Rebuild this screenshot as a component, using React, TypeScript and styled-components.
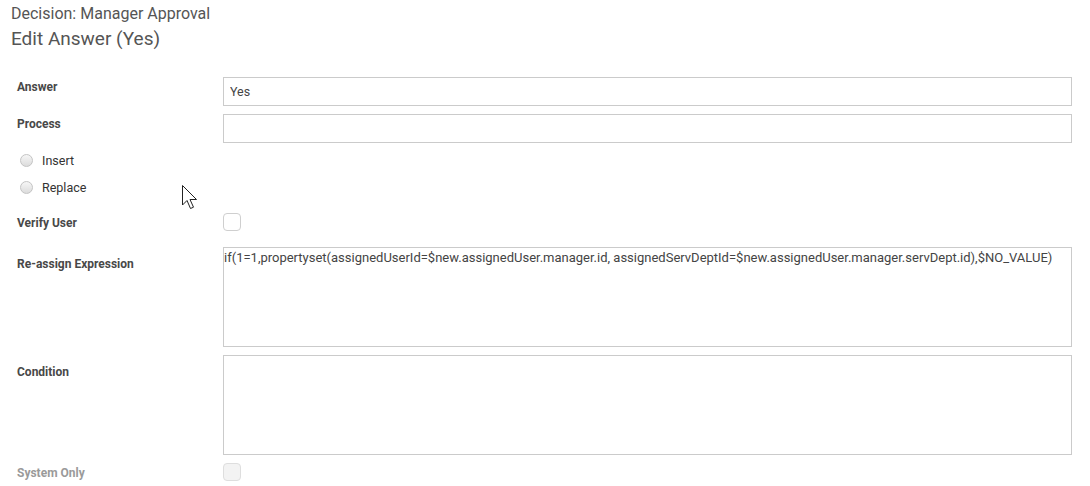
import React from "react";
import styled, { createGlobalStyle } from "styled-components";

const Global = createGlobalStyle`
  html, body { margin: 0; padding: 0; background: #fff; }
  body { font-family: Roboto, "Liberation Sans", Arial, sans-serif; color: #333; }
  * { box-sizing: border-box; }
`;

const Page = styled.div`
  position: relative;
  width: 1090px;
  height: 486px;
  overflow: hidden;
  padding: 4px 18px 0 11px;
`;

const Crumb = styled.div`
  font-size: 16px;
  line-height: 19px;
  color: #555;
`;

const Title = styled.h1`
  margin: 5px 0 0;
  font-size: 19px;
  line-height: 22px;
  font-weight: 400;
  color: #555;
`;

const Form = styled.div`
  margin: 27px 0 0 6px;
  display: flex;
  flex-direction: column;
`;

const Row = styled.div<{ $mt?: number }>`
  display: grid;
  grid-template-columns: 206px 1fr;
  align-items: start;
  margin-top: ${(p) => p.$mt ?? 0}px;
`;

const Label = styled.label<{ $pt?: number; $muted?: boolean }>`
  font-size: 12px;
  line-height: 14px;
  font-weight: 700;
  color: ${(p) => (p.$muted ? "#9a9a9a" : "#484848")};
  padding-top: ${(p) => p.$pt ?? 0}px;
`;

const TextInput = styled.input`
  display: block;
  width: 100%;
  height: 29px;
  border: 1px solid #cbcbcb;
  border-radius: 0;
  padding: 0 6px;
  font-family: Roboto, "Liberation Sans", Arial, sans-serif;
  font-size: 12.5px;
  color: #444;
  background: #fff;
  outline: none;
`;

const Area = styled.textarea`
  display: block;
  width: 100%;
  height: 100px;
  border: 1px solid #cbcbcb;
  border-radius: 0;
  padding: 2px 0 0 0;
  margin: 0;
  font-family: Roboto, "Liberation Sans", Arial, sans-serif;
  font-size: 13px;
  line-height: 15px;
  color: #444;
  resize: none;
  outline: none;
  overflow: hidden;
  white-space: pre;
`;

const RadioRow = styled.label<{ $mt?: number }>`
  display: flex;
  align-items: center;
  height: 27px;
  margin-top: ${(p) => p.$mt ?? 0}px;
  padding-left: 3px;
  gap: 9px;
  font-size: 12.5px;
  color: #333;
`;

const Radio = styled.input`
  appearance: none;
  margin: 0;
  width: 13px;
  height: 13px;
  border-radius: 50%;
  border: 1px solid #c4c4c4;
  background: linear-gradient(#f6f6f6, #dcdcdc);
`;

const Check = styled.input<{ $disabled?: boolean }>`
  appearance: none;
  margin: 0;
  display: block;
  width: 18px;
  height: 18px;
  border-radius: 4px;
  border: 1px solid ${(p) => (p.$disabled ? "#dedede" : "#cfcfcf")};
  background: ${(p) => (p.$disabled ? "#f3f3f3" : "#fff")};
`;

const Cursor = styled.svg`
  position: absolute;
  left: 181px;
  top: 184px;
`;

const expr =
  "if(1=1,propertyset(assignedUserId=$new.assignedUser.manager.id, assignedServDeptId=$new.assignedUser.manager.servDept.id),$NO_VALUE)";

export default function App() {
  return (
    <Page>
      <Global />
      <Crumb>Decision: Manager Approval</Crumb>
      <Title>Edit Answer (Yes)</Title>
      <Form>
        <Row>
          <Label $pt={3}>Answer</Label>
          <TextInput readOnly value="Yes" />
        </Row>
        <Row $mt={8}>
          <Label $pt={3}>Process</Label>
          <TextInput readOnly value="" />
        </Row>
        <RadioRow $mt={4}>
          <Radio type="radio" name="mode" readOnly />
          Insert
        </RadioRow>
        <RadioRow>
          <Radio type="radio" name="mode" readOnly />
          Replace
        </RadioRow>
        <Row $mt={12}>
          <Label $pt={3}>Verify User</Label>
          <Check type="checkbox" readOnly />
        </Row>
        <Row $mt={16}>
          <Label $pt={10}>Re-assign Expression</Label>
          <Area readOnly value={expr} />
        </Row>
        <Row $mt={8}>
          <Label $pt={10}>Condition</Label>
          <Area readOnly value="" />
        </Row>
        <Row $mt={8}>
          <Label $pt={3} $muted>
            System Only
          </Label>
          <Check type="checkbox" readOnly disabled $disabled />
        </Row>
      </Form>
      <Cursor width="20" height="30" viewBox="0 0 20 30">
        <path
          d="M1.5 1.5 L1.5 21 L6 16.5 L9.5 24.5 L12.5 23.2 L9 15.5 L15.5 15.5 Z"
          fill="#fff"
          stroke="#222"
          strokeWidth="1"
          strokeLinejoin="round"
        />
      </Cursor>
    </Page>
  );
}
